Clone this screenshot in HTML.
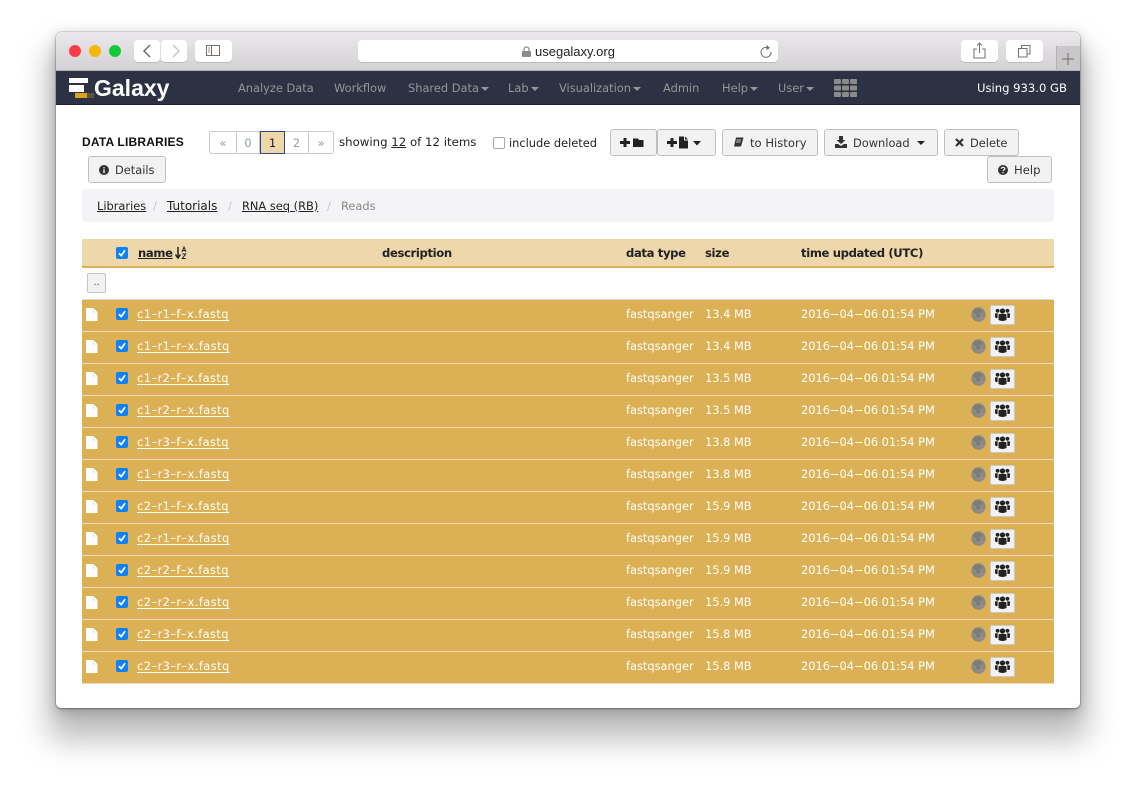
<!DOCTYPE html>
<html><head><meta charset="utf-8"><title>usegalaxy.org</title>
<style>
*{box-sizing:border-box}
html,body{margin:0;padding:0;width:1136px;height:788px;overflow:hidden;background:#fff;font-family:"DejaVu Sans","Liberation Sans",sans-serif;font-size:11.4px;color:#222}
.a{position:absolute;white-space:nowrap}
svg{position:absolute;display:block}
#win{position:absolute;left:56px;top:32px;width:1024px;height:676px;background:#fff;border-radius:6px 6px 5px 5px;box-shadow:0 0 0 1px rgba(0,0,0,.1),0 1px 2px rgba(0,0,0,.3),0 4px 14px rgba(0,0,0,.2),0 24px 30px 8px rgba(0,0,0,.26)}
#tb{position:absolute;left:56px;top:32px;width:1024px;height:39px;background:linear-gradient(#ebe9eb,#d3d1d3);border-radius:6px 6px 0 0;border-bottom:1px solid #b4b2b4}
.tbtn{position:absolute;top:40px;height:22px;background:#fff;border-radius:4px;box-shadow:0 1px 0 #bdbbbd}
.dot{position:absolute;top:45px;width:12px;height:12px;border-radius:50%}
#nav{position:absolute;left:56px;top:71px;width:1024px;height:34px;background:#2c3143;border-bottom:1px solid #1d2130}
.n{position:absolute;top:81px;color:#969696;font-size:11.4px;line-height:14px;white-space:nowrap}
.n i{display:inline-block;width:0;height:0;border-left:4px solid transparent;border-right:4px solid transparent;border-top:4px solid #969696;margin-left:2px;vertical-align:1px}
.btn{position:absolute;height:27px;background:#f2f2f2;border:1px solid #bfbfbf;border-radius:3px;color:#333;font-size:11.6px;line-height:26px;white-space:nowrap}
.pg{position:absolute;top:131px;height:23px;border:1px solid #c9c9c9;margin-left:-1px;text-align:center;line-height:23px;color:#8f9ea3;font-size:11.4px;background:#fff}
.row{position:absolute;left:82px;width:972px;height:32px;background:#dcb155;border-bottom:1px solid #eddcb6;color:#fff}
.row .t{position:absolute;top:7px;line-height:15px;white-space:nowrap}
.row .l{left:55px;text-decoration:underline;text-underline-offset:2px;letter-spacing:.43px}
.cb{position:absolute;left:34px;top:8px;width:12px;height:12px;border-radius:2px;background:#0d82f8}
.fi{left:4px;top:8px}
.gl{left:889px;top:7px}
.gb{position:absolute;left:908px;top:5px;width:25px;height:20px;background:#f2f2f2;border:1px solid #c9c9c9;border-radius:2px}
.th{position:absolute;top:246px;font-weight:bold;font-size:11.6px;letter-spacing:-.35px;line-height:14px;color:#222;white-space:nowrap}
</style></head>
<body>
<svg width="0" height="0" style="position:absolute"><defs>
<symbol id="file" viewBox="0 0 12 13"><path d="M0 0H7.5L11.5 4V13H0Z" fill="#fff"/><path d="M7.5 .5V4H11" fill="none" stroke="#efdcae" stroke-width=".8"/></symbol>
<symbol id="check" viewBox="0 0 12 12"><path d="M3 6.2L5.2 8.6L9 3.2" fill="none" stroke="#fff" stroke-width="1.7"/></symbol>
<symbol id="globe" viewBox="0 0 15 15"><circle cx="7.5" cy="7.5" r="7.2" fill="#8b8b85"/><path d="M4 2L9 1.5L12 5L8 6L9 9L6 11L5 7L2 5ZM11 10L13 9.5L11.5 12.5Z" fill="#7a7a76"/><path d="M10.5 10.5L12.5 10L11 12Z" fill="#dcb155"/></symbol>
<symbol id="group" viewBox="0 0 15 13"><circle cx="7.5" cy="3" r="2.6" fill="#222"/><circle cx="2.6" cy="2.8" r="1.9" fill="#222"/><circle cx="12.4" cy="2.8" r="1.9" fill="#222"/><path d="M4.5 6H10.5Q11.5 6 11.5 7.5V12Q9.5 13 7.5 13T3.5 12V7.5Q3.5 6 4.5 6ZM0 5.4H3.3Q2.6 6 2.6 7.5V10H1Q0 9.6 0 9ZM15 5.4H11.7Q12.4 6 12.4 7.5V10H14Q15 9.6 15 9Z" fill="#222"/></symbol>
</defs></svg>

<div id="win"></div>
<div id="tb"></div>
<div class="dot" style="left:69px;background:#fc3d47"></div>
<div class="dot" style="left:89px;background:#f5b806"></div>
<div class="dot" style="left:109px;background:#16c93a"></div>
<div class="tbtn" style="left:134px;width:26px"></div>
<div class="tbtn" style="left:161px;width:26px"></div>
<svg style="left:134px;top:40px" width="53" height="22"><path d="M16 5L10 11L16 17" fill="none" stroke="#6f6a66" stroke-width="1.5"/><path d="M39 5L45 11L39 17" fill="none" stroke="#c9c7c7" stroke-width="1.5"/></svg>
<div class="tbtn" style="left:195px;width:37px"></div>
<svg style="left:206px;top:45px" width="15" height="12"><rect x=".5" y=".5" width="13" height="10" fill="none" stroke="#77706a"/><path d="M5.5 0V11" stroke="#77706a"/><path d="M2 3H4M2 5H4M2 7H4" stroke="#77706a" stroke-width=".8"/></svg>
<div class="tbtn" style="left:358px;width:420px"></div>
<svg style="left:522px;top:46px" width="9" height="11"><path d="M2 5V3.5A2.5 2.5 0 0 1 7 3.5V5" fill="none" stroke="#8a8a8a" stroke-width="1.2"/><rect x="0" y="5" width="9" height="6" rx="1" fill="#8a8a8a"/></svg>
<div class="a" style="left:535px;top:44px;font-family:'Liberation Sans',sans-serif;font-size:13px;line-height:15px;color:#222">usegalaxy.org</div>
<svg style="left:759px;top:44px" width="14" height="15"><path d="M9.8 4.2A5 5 0 1 0 12 8" fill="none" stroke="#6f6a66" stroke-width="1"/><path d="M7.5 1L11 4L7.5 6Z" fill="#6f6a66"/></svg>
<div class="tbtn" style="left:961px;width:37px"></div>
<svg style="left:973px;top:42px" width="14" height="17"><path d="M4 7H1V16H12V7H9M6.5 11V1M4 3.5L6.5 1L9 3.5" fill="none" stroke="#77706a"/></svg>
<div class="tbtn" style="left:1006px;width:37px"></div>
<svg style="left:1018px;top:45px" width="13" height="13"><rect x=".5" y="3.5" width="8.5" height="8.5" fill="none" stroke="#77706a"/><path d="M3.5 3V.5H12V9H9.5" fill="none" stroke="#77706a"/></svg>
<div class="a" style="left:1056px;top:46px;width:24px;height:24px;background:#c9c7c9;border-left:1px solid #b5b3b5"></div>
<svg style="left:1061px;top:52px" width="14" height="14"><path d="M7 1V13M1 7H13" stroke="#6f6d6d" stroke-width="1"/></svg>

<div id="nav"></div>
<svg style="left:69px;top:78px" width="26" height="21"><path d="M0 0H19V5H0ZM0 7H15V14H0Z" fill="#fff"/><rect x="6" y="15" width="12" height="5" fill="#d9a514"/><rect x="18" y="15" width="7" height="5" fill="#5a5548"/></svg>
<div class="a" style="left:94px;top:76px;font-family:'Liberation Sans',sans-serif;font-weight:bold;font-size:23px;line-height:24px;color:#fff">Galaxy</div>
<div class="n" style="left:238px">Analyze Data</div>
<div class="n" style="left:334px">Workflow</div>
<div class="n" style="left:408px">Shared Data<i></i></div>
<div class="n" style="left:508px">Lab<i></i></div>
<div class="n" style="left:559px">Visualization<i></i></div>
<div class="n" style="left:663px">Admin</div>
<div class="n" style="left:722px">Help<i></i></div>
<div class="n" style="left:778px">User<i></i></div>
<svg style="left:834px;top:79px" width="23" height="18" fill="#8b8b8b"><rect width="7" height="5" rx="1"/><rect x="8" width="7" height="5" rx="1"/><rect x="16" width="7" height="5" rx="1"/><rect y="6.5" width="7" height="5" rx="1"/><rect x="8" y="6.5" width="7" height="5" rx="1"/><rect x="16" y="6.5" width="7" height="5" rx="1"/><rect y="13" width="7" height="5" rx="1"/><rect x="8" y="13" width="7" height="5" rx="1"/><rect x="16" y="13" width="7" height="5" rx="1"/></svg>
<div class="a" style="left:977px;top:81px;font-size:11.6px;line-height:14px;color:#fff">Using 933.0 GB</div>

<div class="a" style="left:82px;top:135px;font-size:12px;font-weight:bold;line-height:14px;color:#111;font-family:'Liberation Sans',sans-serif;letter-spacing:.2px">DATA LIBRARIES</div>
<div class="pg" style="left:209px;width:28px;margin:0;border-radius:3px 0 0 3px">«</div>
<div class="pg" style="left:237px;width:24px">0</div>
<div class="pg" style="left:261px;width:25px;background:#eed8ab;border-color:#2c4a80;color:#222;z-index:2">1</div>
<div class="pg" style="left:285px;width:25px">2</div>
<div class="pg" style="left:309px;width:26px;border-radius:0 3px 3px 0">»</div>
<div class="a" style="left:339px;top:135px;font-size:11.75px;line-height:14px;color:#222">showing <u>12</u> of 12 items</div>
<div class="a" style="left:493px;top:137px;width:12px;height:12px;border:1px solid #a8a8a8;border-radius:2px;background:#fff"></div>
<div class="a" style="left:509px;top:136px;line-height:14px;color:#222">include deleted</div>

<div class="btn" style="left:610px;top:129px;width:47px"></div>
<svg style="left:620px;top:137px" width="25" height="11" fill="#222"><path d="M3.5 1H6.5V4H10V7H6.5V10H3.5V7H0V4H3.5Z"/><path d="M13 1.5H18L19 3H23.5V10H13Z"/></svg>
<div class="btn" style="left:657px;top:129px;width:59px"></div>
<svg style="left:667px;top:136px" width="38" height="13" fill="#222"><path d="M3.5 2H6.5V5H10V8H6.5V11H3.5V8H0V5H3.5Z"/><path d="M12 .5H17V4.5H21V12.5H12ZM18 .5L21 3.5H18Z"/><path d="M26 5H34L30 9.5Z"/></svg>
<div class="btn" style="left:722px;top:129px;width:96px;padding-left:27px">to History</div>
<svg style="left:733px;top:137px" width="11" height="11"><path d="M3 .5H10.5L8 9.5H1Z" fill="#333"/><path d="M3.5 3H8M3 5H7.5" stroke="#f2f2f2" stroke-width=".8"/></svg>
<div class="btn" style="left:824px;top:129px;width:114px;padding-left:28px;font-size:11.4px">Download</div>
<svg style="left:835px;top:136px" width="12" height="12" fill="#333"><path d="M4 0H8V4H10.5L6 8L1.5 4H4ZM0 8H3L6 10L9 8H12V12H0Z"/></svg>
<svg style="left:917px;top:141px" width="10" height="5"><path d="M0 0H8L4 4Z" fill="#222"/></svg>
<div class="btn" style="left:944px;top:129px;width:75px;padding-left:25px;font-size:11.4px">Delete</div>
<svg style="left:955px;top:138px" width="9" height="9"><path d="M1 1L8 8M8 1L1 8" stroke="#333" stroke-width="2.2"/></svg>
<div class="btn" style="left:88px;top:156px;width:78px;padding-left:26px;font-size:11.4px">Details</div>
<svg style="left:99px;top:165px" width="10" height="10"><circle cx="5" cy="5" r="5" fill="#333"/><path d="M5 2.2V3.4M5 4.5V8" stroke="#f2f2f2" stroke-width="1.5"/></svg>
<div class="btn" style="left:987px;top:156px;width:65px;padding-left:26px">Help</div>
<svg style="left:998px;top:165px" width="10" height="10"><circle cx="5" cy="5" r="5" fill="#333"/><path d="M3.2 3.8Q3.5 2.3 5 2.3T6.8 3.7Q6.8 4.6 5.5 5.2L5 6M5 7V8.3" fill="none" stroke="#f2f2f2" stroke-width="1.2"/></svg>

<div class="a" style="left:82px;top:189px;width:972px;height:33px;background:#f4f4f6;border-radius:3px"></div>
<div class="a" style="left:97px;top:199px;line-height:14px;color:#222"><u>Libraries</u></div>
<div class="a" style="left:153px;top:199px;line-height:14px;color:#c8c8c8">/</div>
<div class="a" style="left:167px;top:199px;font-size:12px;line-height:14px;color:#222"><u>Tutorials</u></div>
<div class="a" style="left:228px;top:199px;line-height:14px;color:#c8c8c8">/</div>
<div class="a" style="left:242px;top:199px;font-size:11.4px;line-height:14px;color:#222"><u>RNA seq (RB)</u></div>
<div class="a" style="left:327px;top:199px;line-height:14px;color:#c8c8c8">/</div>
<div class="a" style="left:341px;top:199px;line-height:14px;color:#888">Reads</div>

<div class="a" style="left:82px;top:239px;width:972px;height:29px;background:#eed8ab;border-bottom:2px solid #dcb155"></div>
<div class="a" style="left:116px;top:247px;width:12px;height:12px;border-radius:2px;background:#0d82f8"></div>
<svg style="left:116px;top:247px" width="12" height="12"><use href="#check"/></svg>
<div class="th" style="left:138px"><u>name</u></div>
<svg style="left:175px;top:246px" width="12" height="14"><path d="M3 1V11M.5 8.5L3 12L5.5 8.5" fill="none" stroke="#222" stroke-width="1.5"/><path d="M7 6L9 1L11 6M8 4.5H10M7.3 8H10.7L7.3 12.5H10.8" fill="none" stroke="#222" stroke-width="1"/></svg>
<div class="th" style="left:382px">description</div>
<div class="th" style="left:626px">data type</div>
<div class="th" style="left:705px">size</div>
<div class="th" style="left:801px">time updated (UTC)</div>

<div class="a" style="left:87px;top:273px;width:19px;height:20px;background:#f2f2f2;border:1px solid #c4c4c4;border-radius:2px;color:#444;font-size:10px;line-height:18px;text-align:center">..</div>
<div class="a" style="left:82px;top:299px;width:972px;height:1px;background:#d8d8d8"></div>

<div class="row" style="top:300px"><svg class="fi" width="12" height="13"><use href="#file"/></svg><div class="cb"><svg width="12" height="12"><use href="#check"/></svg></div><div class="t l">c1–r1–f–x.fastq</div><div class="t" style="left:544px">fastqsanger</div><div class="t" style="left:623px">13.4 MB</div><div class="t" style="left:719px">2016−04−06 01:54 PM</div><svg class="gl" width="15" height="15"><use href="#globe"/></svg><div class="gb"><svg style="left:4px;top:2px" width="15" height="13"><use href="#group"/></svg></div></div>
<div class="row" style="top:332px"><svg class="fi" width="12" height="13"><use href="#file"/></svg><div class="cb"><svg width="12" height="12"><use href="#check"/></svg></div><div class="t l">c1–r1–r–x.fastq</div><div class="t" style="left:544px">fastqsanger</div><div class="t" style="left:623px">13.4 MB</div><div class="t" style="left:719px">2016−04−06 01:54 PM</div><svg class="gl" width="15" height="15"><use href="#globe"/></svg><div class="gb"><svg style="left:4px;top:2px" width="15" height="13"><use href="#group"/></svg></div></div>
<div class="row" style="top:364px"><svg class="fi" width="12" height="13"><use href="#file"/></svg><div class="cb"><svg width="12" height="12"><use href="#check"/></svg></div><div class="t l">c1–r2–f–x.fastq</div><div class="t" style="left:544px">fastqsanger</div><div class="t" style="left:623px">13.5 MB</div><div class="t" style="left:719px">2016−04−06 01:54 PM</div><svg class="gl" width="15" height="15"><use href="#globe"/></svg><div class="gb"><svg style="left:4px;top:2px" width="15" height="13"><use href="#group"/></svg></div></div>
<div class="row" style="top:396px"><svg class="fi" width="12" height="13"><use href="#file"/></svg><div class="cb"><svg width="12" height="12"><use href="#check"/></svg></div><div class="t l">c1–r2–r–x.fastq</div><div class="t" style="left:544px">fastqsanger</div><div class="t" style="left:623px">13.5 MB</div><div class="t" style="left:719px">2016−04−06 01:54 PM</div><svg class="gl" width="15" height="15"><use href="#globe"/></svg><div class="gb"><svg style="left:4px;top:2px" width="15" height="13"><use href="#group"/></svg></div></div>
<div class="row" style="top:428px"><svg class="fi" width="12" height="13"><use href="#file"/></svg><div class="cb"><svg width="12" height="12"><use href="#check"/></svg></div><div class="t l">c1–r3–f–x.fastq</div><div class="t" style="left:544px">fastqsanger</div><div class="t" style="left:623px">13.8 MB</div><div class="t" style="left:719px">2016−04−06 01:54 PM</div><svg class="gl" width="15" height="15"><use href="#globe"/></svg><div class="gb"><svg style="left:4px;top:2px" width="15" height="13"><use href="#group"/></svg></div></div>
<div class="row" style="top:460px"><svg class="fi" width="12" height="13"><use href="#file"/></svg><div class="cb"><svg width="12" height="12"><use href="#check"/></svg></div><div class="t l">c1–r3–r–x.fastq</div><div class="t" style="left:544px">fastqsanger</div><div class="t" style="left:623px">13.8 MB</div><div class="t" style="left:719px">2016−04−06 01:54 PM</div><svg class="gl" width="15" height="15"><use href="#globe"/></svg><div class="gb"><svg style="left:4px;top:2px" width="15" height="13"><use href="#group"/></svg></div></div>
<div class="row" style="top:492px"><svg class="fi" width="12" height="13"><use href="#file"/></svg><div class="cb"><svg width="12" height="12"><use href="#check"/></svg></div><div class="t l">c2–r1–f–x.fastq</div><div class="t" style="left:544px">fastqsanger</div><div class="t" style="left:623px">15.9 MB</div><div class="t" style="left:719px">2016−04−06 01:54 PM</div><svg class="gl" width="15" height="15"><use href="#globe"/></svg><div class="gb"><svg style="left:4px;top:2px" width="15" height="13"><use href="#group"/></svg></div></div>
<div class="row" style="top:524px"><svg class="fi" width="12" height="13"><use href="#file"/></svg><div class="cb"><svg width="12" height="12"><use href="#check"/></svg></div><div class="t l">c2–r1–r–x.fastq</div><div class="t" style="left:544px">fastqsanger</div><div class="t" style="left:623px">15.9 MB</div><div class="t" style="left:719px">2016−04−06 01:54 PM</div><svg class="gl" width="15" height="15"><use href="#globe"/></svg><div class="gb"><svg style="left:4px;top:2px" width="15" height="13"><use href="#group"/></svg></div></div>
<div class="row" style="top:556px"><svg class="fi" width="12" height="13"><use href="#file"/></svg><div class="cb"><svg width="12" height="12"><use href="#check"/></svg></div><div class="t l">c2–r2–f–x.fastq</div><div class="t" style="left:544px">fastqsanger</div><div class="t" style="left:623px">15.9 MB</div><div class="t" style="left:719px">2016−04−06 01:54 PM</div><svg class="gl" width="15" height="15"><use href="#globe"/></svg><div class="gb"><svg style="left:4px;top:2px" width="15" height="13"><use href="#group"/></svg></div></div>
<div class="row" style="top:588px"><svg class="fi" width="12" height="13"><use href="#file"/></svg><div class="cb"><svg width="12" height="12"><use href="#check"/></svg></div><div class="t l">c2–r2–r–x.fastq</div><div class="t" style="left:544px">fastqsanger</div><div class="t" style="left:623px">15.9 MB</div><div class="t" style="left:719px">2016−04−06 01:54 PM</div><svg class="gl" width="15" height="15"><use href="#globe"/></svg><div class="gb"><svg style="left:4px;top:2px" width="15" height="13"><use href="#group"/></svg></div></div>
<div class="row" style="top:620px"><svg class="fi" width="12" height="13"><use href="#file"/></svg><div class="cb"><svg width="12" height="12"><use href="#check"/></svg></div><div class="t l">c2–r3–f–x.fastq</div><div class="t" style="left:544px">fastqsanger</div><div class="t" style="left:623px">15.8 MB</div><div class="t" style="left:719px">2016−04−06 01:54 PM</div><svg class="gl" width="15" height="15"><use href="#globe"/></svg><div class="gb"><svg style="left:4px;top:2px" width="15" height="13"><use href="#group"/></svg></div></div>
<div class="row" style="top:652px"><svg class="fi" width="12" height="13"><use href="#file"/></svg><div class="cb"><svg width="12" height="12"><use href="#check"/></svg></div><div class="t l">c2–r3–r–x.fastq</div><div class="t" style="left:544px">fastqsanger</div><div class="t" style="left:623px">15.8 MB</div><div class="t" style="left:719px">2016−04−06 01:54 PM</div><svg class="gl" width="15" height="15"><use href="#globe"/></svg><div class="gb"><svg style="left:4px;top:2px" width="15" height="13"><use href="#group"/></svg></div></div>
</body></html>
